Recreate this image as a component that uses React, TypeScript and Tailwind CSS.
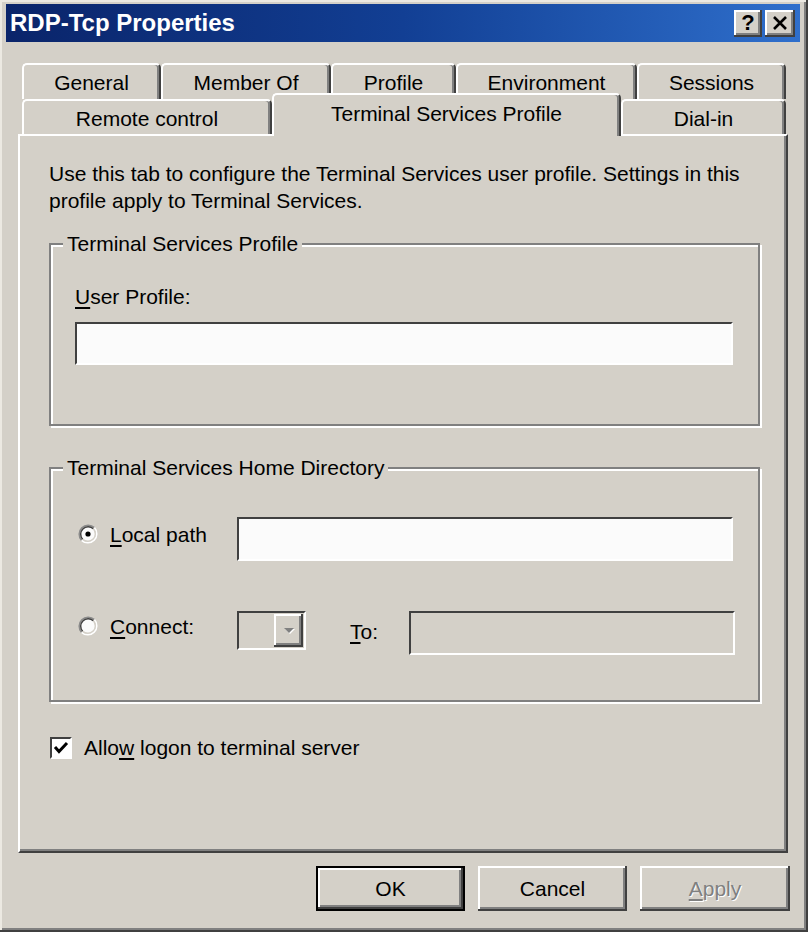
import React from "react";

const raised =
  "bg-[#d4d0c8] shadow-[inset_-2px_-2px_0_#404040,inset_2px_2px_0_#ffffff,inset_-4px_-4px_0_#808080]";
const sunken =
  "border-t-2 border-l-2 border-r-2 border-b-2 border-t-[#404040] border-l-[#404040] border-r-white border-b-white";
const tabBase =
  "flex justify-center bg-[#d4d0c8] border-t-2 border-l-2 border-r-2 border-t-white border-l-white border-r-[#404040] rounded-t-[5px] shadow-[inset_-2px_0_0_#808080]";

const Key = ({ k }: { k: string }) => (
  <span className="underline underline-offset-[3px]">{k}</span>
);

const Radio = ({ checked }: { checked?: boolean }) => (
  <svg width="20" height="20" viewBox="0 0 20 20" className="shrink-0">
    <circle cx="10" cy="10" r="7.5" fill="#fbfbfb" />
    <path d="M3.64 16.36 A9 9 0 0 1 16.36 3.64" stroke="#8a8a8a" strokeWidth="1.6" fill="none" />
    <path d="M16.36 3.64 A9 9 0 0 1 3.64 16.36" stroke="#ffffff" strokeWidth="1.6" fill="none" />
    <path d="M4.7 15.3 A7.5 7.5 0 0 1 15.3 4.7" stroke="#404040" strokeWidth="1.4" fill="none" />
    <path d="M15.3 4.7 A7.5 7.5 0 0 1 4.7 15.3" stroke="#d4d0c8" strokeWidth="1.4" fill="none" />
    {checked && <circle cx="10" cy="10" r="2.6" fill="#000" />}
  </svg>
);

const Tab = ({ label, w }: { label: string; w: string }) => (
  <div className={`${tabBase} ${w} h-full items-center`}>{label}</div>
);

export default function App() {
  return (
    <div className="w-[808px] h-[932px] overflow-hidden bg-[#d4d0c8] text-black font-['Liberation_Sans',Arial,sans-serif] text-[21px] leading-[27px] shadow-[inset_-2px_-2px_0_#404040,inset_2px_2px_0_#ece9e2,inset_-4px_-4px_0_#808080]">
      {/* title bar */}
      <div className="ml-[6px] mt-[4px] w-[794px] h-[38px] flex items-center justify-between bg-linear-to-r from-[#0a246a] via-[#123f94] to-[#2f6fcc] pl-[4px] pr-[5px]">
        <span className="text-white font-bold text-[24px] leading-none">RDP-Tcp Properties</span>
        <div className="flex gap-[3px]">
          <div className={`${raised} w-[28px] h-[27px] flex items-center justify-center font-bold text-[22px] leading-none`}>
            ?
          </div>
          <div className={`${raised} w-[30px] h-[27px] flex items-center justify-center`}>
            <svg width="16" height="14" viewBox="0 0 16 14">
              <path d="M2 1 L14 13 M14 1 L2 13" stroke="#000" strokeWidth="2.6" />
            </svg>
          </div>
        </div>
      </div>

      {/* tabs + page */}
      <div className="ml-[18px] mt-[21px] w-[770px] flex flex-col">
        <div className="flex h-[36px] pl-[4px]">
          <Tab label="General" w="w-[139px]" />
          <Tab label="Member Of" w="w-[170px]" />
          <Tab label="Profile" w="w-[125px]" />
          <Tab label="Environment" w="w-[181px]" />
          <Tab label="Sessions" w="w-[149px]" />
        </div>
        <div className="flex h-[35px] pl-[4px] items-end">
          <div className={`${tabBase} w-[250px] h-[35px] items-center pt-[2px]`}>Remote control</div>
          <div className={`${tabBase} relative z-10 w-[349px] h-[43px] -mb-[2px] items-center pb-[4px]`}>
            Terminal Services Profile
          </div>
          <div className={`${tabBase} w-[165px] h-[35px] items-center pt-[2px]`}>Dial-in</div>
        </div>

        <div className="w-[770px] h-[719px] border-2 border-t-white border-l-white border-r-[#404040] border-b-[#404040] shadow-[inset_-2px_-2px_0_#808080] pt-[24px] pl-[29px] pr-[26px] flex flex-col">
          <p className="whitespace-nowrap">
            Use this tab to configure the Terminal Services user profile. Settings in this
            <br />
            profile apply to Terminal Services.
          </p>

          <fieldset className="mt-[16px] border-2 border-[#808080] shadow-[2px_2px_0_#ffffff,inset_2px_2px_0_#ffffff]">
            <legend className="ml-[12px] px-[4px] bg-[#d4d0c8]">Terminal Services Profile</legend>
            <div className="pt-[26px] pl-[24px] pr-[25px] pb-[59px] flex flex-col">
              <span>
                <Key k="U" />
                ser Profile:
              </span>
              <div className={`${sunken} mt-[12px] h-[43px] bg-[#fbfbfb]`} />
            </div>
          </fieldset>

          <fieldset className="mt-[28px] border-2 border-[#808080] shadow-[2px_2px_0_#ffffff,inset_2px_2px_0_#ffffff]">
            <legend className="ml-[12px] px-[4px] bg-[#d4d0c8]">Terminal Services Home Directory</legend>
            <div className="pt-[36px] pl-[27px] pr-[23px] pb-[45px] flex flex-col">
              <div className="flex items-start h-[44px]">
                <div className="w-[159px] h-[34px] flex items-center gap-[12px]">
                  <Radio checked />
                  <span>
                    <Key k="L" />
                    ocal path
                  </span>
                </div>
                <div className={`${sunken} w-[496px] h-[44px] bg-[#fbfbfb]`} />
              </div>
              <div className="flex items-start h-[44px] mt-[50px]">
                <div className="w-[159px] h-[30px] flex items-center gap-[12px]">
                  <Radio />
                  <span>
                    <Key k="C" />
                    onnect:
                  </span>
                </div>
                <div className={`${sunken} w-[69px] h-[39px] flex justify-end p-[1px]`}>
                  <div className={`${raised} w-[29px] h-full flex items-center justify-center`}>
                    <svg width="12" height="8" viewBox="0 0 12 8">
                      <path d="M2 2 H12 L7 7 Z" fill="#ffffff" />
                      <path d="M1 1 H11 L6 6 Z" fill="#808080" />
                    </svg>
                  </div>
                </div>
                <div className="w-[103px] h-[40px] flex items-center pl-[44px]">
                  <span>
                    <Key k="T" />
                    o:
                  </span>
                </div>
                <div className={`${sunken} w-[326px] h-[44px] bg-[#d4d0c8]`} />
              </div>
            </div>
          </fieldset>

          <div className="mt-[32px] ml-[1px] flex items-center gap-[12px]">
            <div className={`${sunken} w-[22px] h-[22px] bg-white flex items-center justify-center`}>
              <svg width="16" height="14" viewBox="0 0 16 14">
                <path d="M2 6 L6 10.5 L14 2" stroke="#000" strokeWidth="3" fill="none" />
              </svg>
            </div>
            <span>
              Allo<Key k="w" /> logon to terminal server
            </span>
          </div>
        </div>
      </div>

      {/* buttons */}
      <div className="mt-[13px] flex justify-end gap-[13px] pr-[18px]">
        <div className="w-[149px] h-[45px] border-2 border-black">
          <div className={`${raised} w-full h-full flex items-center justify-center`}>OK</div>
        </div>
        <div className={`${raised} w-[149px] h-[45px] flex items-center justify-center`}>Cancel</div>
        <div className={`${raised} w-[150px] h-[45px] flex items-center justify-center text-[#808080] [text-shadow:1px_1px_0_#ffffff]`}>
          <span>
            <Key k="A" />
            pply
          </span>
        </div>
      </div>
    </div>
  );
}
